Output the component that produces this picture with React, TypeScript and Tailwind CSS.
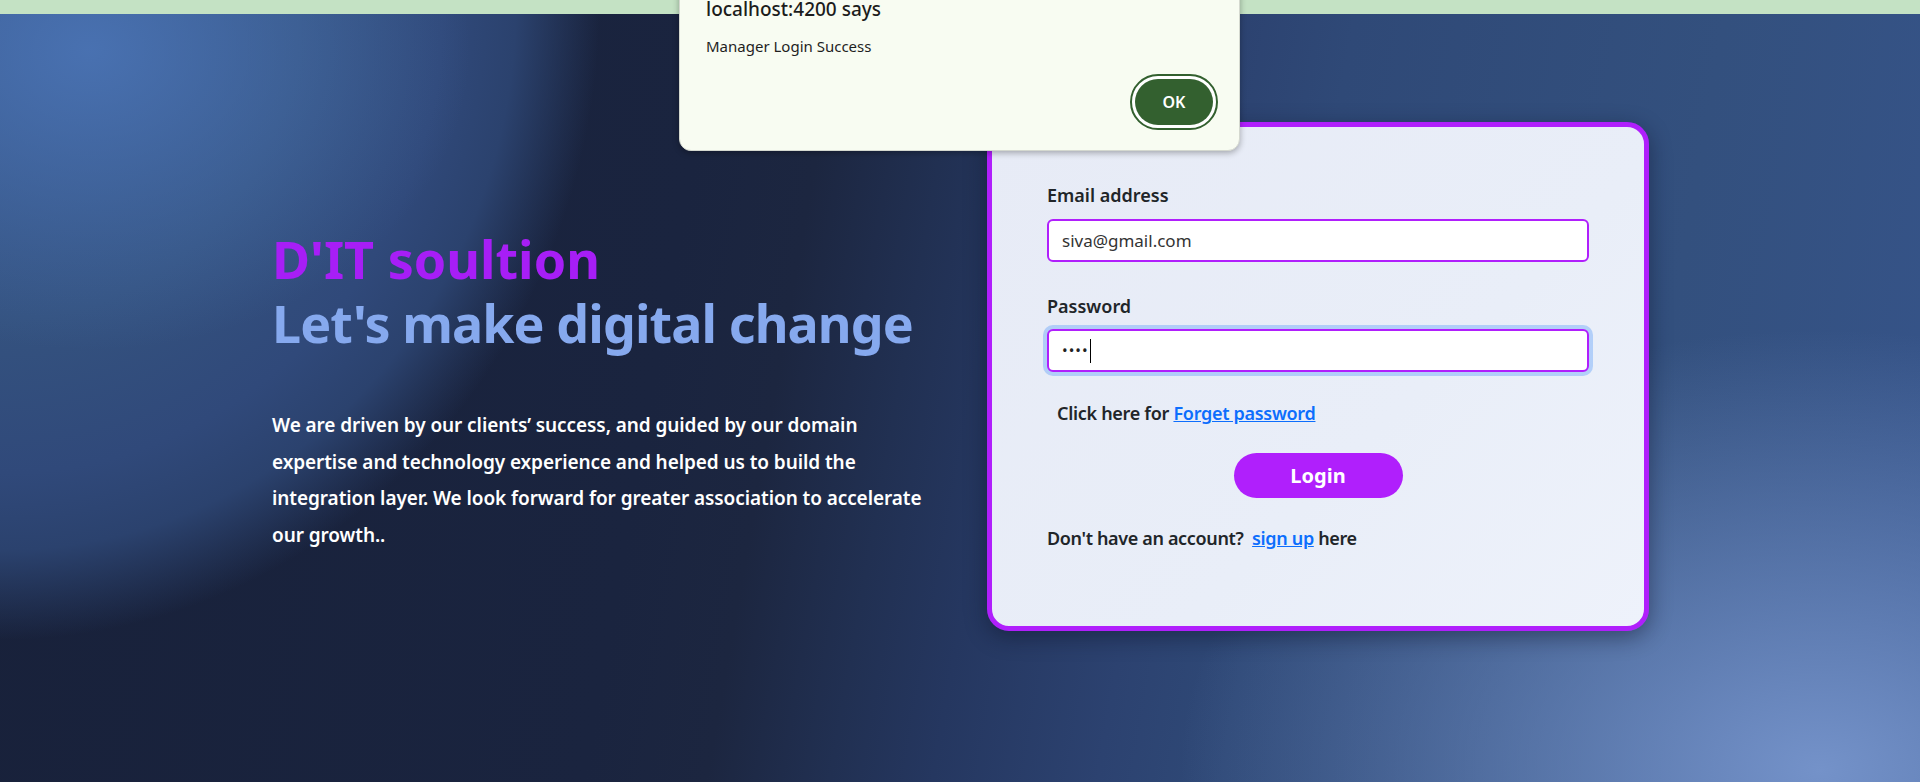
import React from 'react';

function AlertDialog() {
  return (
    <div className="absolute left-[679px] top-[-20px] w-[561px] rounded-[12px] border border-[#d4d8cf] bg-[#f8fcf2] pt-[16px] pl-[26px] pr-[21px] pb-[20px] shadow-[0_2px_6px_rgba(0,0,0,0.3)]">
      <div className="text-[19px] leading-[24px] font-medium text-[#1c1c1c]">localhost:4200 says</div>
      <div className="mt-[15px] text-[15px] leading-[20px] text-[#1f1f1f]">Manager Login Success</div>
      <div className="mt-[18px] flex justify-end">
        <button className="rounded-full border-2 border-[#33602f] bg-white p-[3px]">
          <span className="flex h-[46px] w-[78px] items-center justify-center rounded-full bg-[#33602f] text-[16px] font-semibold text-white">
            OK
          </span>
        </button>
      </div>
    </div>
  );
}

function LoginCard() {
  return (
    <div className="w-[662px] rounded-[22px] border-[5px] border-[#b01ffc] bg-[linear-gradient(135deg,#e7ebf6_0%,#e9eef8_60%,#eef2fb_100%)] px-[55px] pt-[54px] pb-[74px] shadow-[0_6px_22px_rgba(10,15,35,0.45)]">
      <label className="block text-[18px] leading-[28px] font-semibold text-[#212529]">Email address</label>
      <input
        readOnly
        value="siva@gmail.com"
        className="mt-[10px] block h-[43px] w-full rounded-[6px] border-2 border-[#b01ffc] bg-white px-[13px] text-[17px] text-[#333] outline-none"
      />

      <label className="mt-[30px] block text-[18px] leading-[28px] font-semibold text-[#212529]">Password</label>
      <div className="mt-[9px] flex h-[43px] w-full items-center rounded-[6px] border-2 border-[#b01ffc] bg-white px-[13px] shadow-[0_0_0_4px_rgba(13,110,253,0.25)]">
        <span className="text-[15px] leading-none tracking-[1px] text-[#222]">••••</span>
        <span className="ml-[1px] h-[24px] w-px bg-black" />
      </div>

      <p className="mt-[27px] pl-[10px] text-[18px] leading-[28px] font-semibold tracking-[-0.3px] text-[#212529]">
        Click here for{' '}
        <a href="#" className="text-[#0d6efd] underline">
          Forget password
        </a>
      </p>

      <div className="mt-[26px] flex justify-center">
        <button className="h-[45px] w-[169px] rounded-full bg-[#b01ffc] text-[20px] font-bold text-white">Login</button>
      </div>

      <p className="mt-[26px] text-[18px] leading-[28px] font-semibold tracking-[-0.35px] text-[#212529]">
        Don't have an account?&nbsp;{' '}
        <a href="#" className="text-[#0d6efd] underline">
          sign up
        </a>{' '}
        here
      </p>
    </div>
  );
}

export default function App() {
  return (
    <div className="relative h-[782px] w-full overflow-hidden font-['Noto_Sans',sans-serif] bg-[#1b2540] bg-[image:radial-gradient(380px_300px_at_90px_50px,rgba(76,118,184,0.85),rgba(76,118,184,0)),radial-gradient(640px_440px_at_1820px_770px,rgba(116,146,201,1),rgba(116,146,201,0)),radial-gradient(600px_640px_at_0_0,#37568a_0%,#34527f_50%,#30497a_74%,#2b426e_86%,rgba(43,66,110,0)_100%),linear-gradient(100deg,#18213a_0%,#1a243f_35%,#1c2640_41%,#213052_47%,#253760_52%,#2c4270_60%,#2f4977_66%,#33507e_84%,#36548a_100%)]">
      <div className="h-[14px] bg-[#c4e2c4]" />

      <main className="flex items-start pl-[272px] pt-[108px]">
        <section className="w-[715px] pt-[105px] pr-[40px]">
          <h1 className="text-[52px] leading-[64px] font-bold">
            <span className="block text-[#a71ef6]">D'IT soultion</span>
            <span className="block tracking-[-0.9px] text-[#86a9ee]">Let's make digital change</span>
          </h1>
          <p className="mt-[52px] text-[19px] leading-[36.5px] font-semibold tracking-[-0.08px] text-white">
            We are driven by our clients’ success, and guided by our domain
            <br />
            expertise and technology experience and helped us to build the
            <br />
            integration layer. We look forward for greater association to accelerate
            <br />
            our growth..
          </p>
        </section>

        <LoginCard />
      </main>

      <AlertDialog />
    </div>
  );
}
